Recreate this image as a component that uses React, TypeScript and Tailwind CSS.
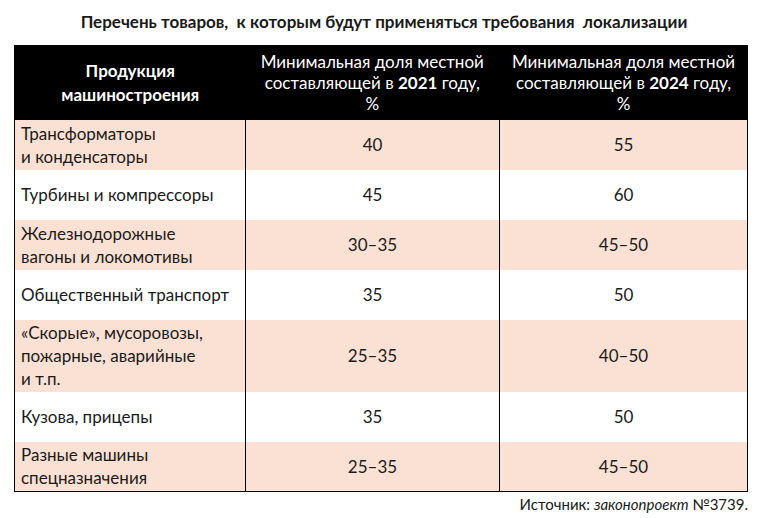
const rows = [
  { name: ["Трансформаторы", "и конденсаторы"], a: "40", b: "55" },
  { name: ["Турбины и компрессоры"], a: "45", b: "60" },
  { name: ["Железнодорожные", "вагоны и локомотивы"], a: "30–35", b: "45–50" },
  { name: ["Общественный транспорт"], a: "35", b: "50" },
  { name: ["«Скорые», мусоровозы,", "пожарные, аварийные", "и т.п."], a: "25–35", b: "40–50" },
  { name: ["Кузова, прицепы"], a: "35", b: "50" },
  { name: ["Разные машины", "спецназначения"], a: "25–35", b: "45–50" },
];

function App() {
  return (
    <div
      className="w-[768px] h-[518px] bg-white text-[#1a1a1a] overflow-hidden"
      style={{ fontFamily: "Lato, 'Open Sans', sans-serif" }}
    >
      <h1 className="pt-[10px] h-[45px] text-center text-[17px] leading-[24px] font-bold">
        Перечень товаров,&nbsp; к которым будут применяться требования&nbsp; локализации
      </h1>
      <table className="ml-[14px] w-[734px] border-collapse border border-black text-[17px] leading-[23px]">
        <thead>
          <tr className="h-[74px] bg-black text-white">
            <th className="w-[231px] font-bold leading-[24px]">
              Продукция
              <br />
              машиностроения
            </th>
            <th className="w-[254px] font-normal leading-[21px] border-r border-black">
              Минимальная доля местной
              <br />
              составляющей в <b>2021</b> году,
              <br />%
            </th>
            <th className="font-normal leading-[21px]">
              Минимальная доля местной
              <br />
              составляющей в <b>2024</b> году,
              <br />%
            </th>
          </tr>
        </thead>
        <tbody>
          {rows.map((r, i) => (
            <tr
              key={i}
              className={`${r.name.length === 3 ? "h-[72px]" : "h-[50px]"} ${
                i % 2 === 0 ? "bg-[#fbe1d4]" : "bg-white"
              }`}
            >
              <td className="pl-[6px] border-r border-black align-middle">
                {r.name.map((l, j) => (
                  <div key={j}>{l}</div>
                ))}
              </td>
              <td className="text-center border-r border-black">{r.a}</td>
              <td className="text-center">{r.b}</td>
            </tr>
          ))}
        </tbody>
      </table>
      <div className="w-[748px] text-right text-[15px] mt-[1px]">
        Источник: <i>законопроект</i> №3739.
      </div>
    </div>
  );
}

export default App;
